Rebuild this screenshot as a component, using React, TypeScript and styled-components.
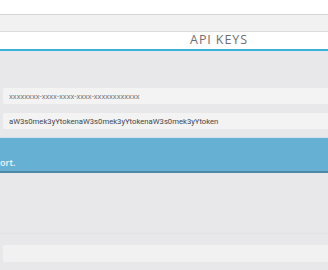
import * as React from 'react';
import styled, { createGlobalStyle } from 'styled-components';

const Global = createGlobalStyle`
  html, body {
    margin: 0;
    padding: 0;
    background: #e8e8ea;
    font-family: Roboto, "Liberation Sans", sans-serif;
    overflow: hidden;
  }
`;

const Page = styled.div`
  width: 328px;
  height: 270px;
  display: flex;
  flex-direction: column;
  background: #e8e8ea;
  overflow: hidden;
`;

const TopStrip = styled.div`
  height: 14px;
  background: #ffffff;
  border-bottom: 1px solid #d6d6d6;
`;

const TabBand = styled.div`
  height: 16px;
  background: #f1f1f1;
  border-bottom: 1px solid #dcdcdc;
`;

const Header = styled.div`
  height: 17px;
  background: #ffffff;
  border-bottom: 2px solid #3ab1d9;
  display: flex;
  align-items: center;
  justify-content: center;
  padding-left: 110px;
  box-sizing: content-box;
`;

const Title = styled.h1`
  margin: 0;
  font-family: "Open Sans", "Liberation Sans", sans-serif;
  font-weight: 400;
  font-size: 12.5px;
  letter-spacing: 0.9px;
  color: #6e6e70;
  line-height: 1;
`;

const Body = styled.div`
  display: flex;
  flex-direction: column;
  padding: 37px 0 0 3px;
  gap: 9px;
`;

const KeyField = styled.div<{ $dim?: boolean }>`
  height: 16px;
  margin-right: -10px;
  background: #f3f3f3;
  border-radius: 2px;
  display: flex;
  align-items: center;
  padding-left: 6px;
  font-size: 7.7px;
  color: ${p => (p.$dim ? '#7a7a7a' : '#44444a')};
  white-space: nowrap;
`;

const Notice = styled.div`
  margin-top: 8px;
  height: 29px;
  background: #66b0d4;
  border-top: 1px solid #d4e3ec;
  border-bottom: 2px solid #4f87a6;
  display: flex;
  align-items: flex-end;
  padding-bottom: 4px;
  box-sizing: content-box;
  font-family: "Open Sans", "Liberation Sans", sans-serif;
  font-weight: 600;
  font-size: 9px;
  color: #eef6fb;
  line-height: 1;
`;

const Divider = styled.div`
  margin-top: 60px;
  height: 1px;
  background: #e2e2e4;
`;

const Footer = styled.div`
  margin: 11px -10px 0 3px;
  height: 17px;
  background: #f1f1f2;
  border-radius: 2px;
`;

export default function App() {
  return (
    <Page>
      <Global />
      <TopStrip />
      <TabBand />
      <Header>
        <Title>API KEYS</Title>
      </Header>
      <Body>
        <KeyField $dim>xxxxxxxx-xxxx-xxxx-xxxx-xxxxxxxxxxxx</KeyField>
        <KeyField>aW3s0mek3yYtokenaW3s0mek3yYtokenaW3s0mek3yYtoken</KeyField>
      </Body>
      <Notice>ort.</Notice>
      <Divider />
      <Footer />
    </Page>
  );
}
